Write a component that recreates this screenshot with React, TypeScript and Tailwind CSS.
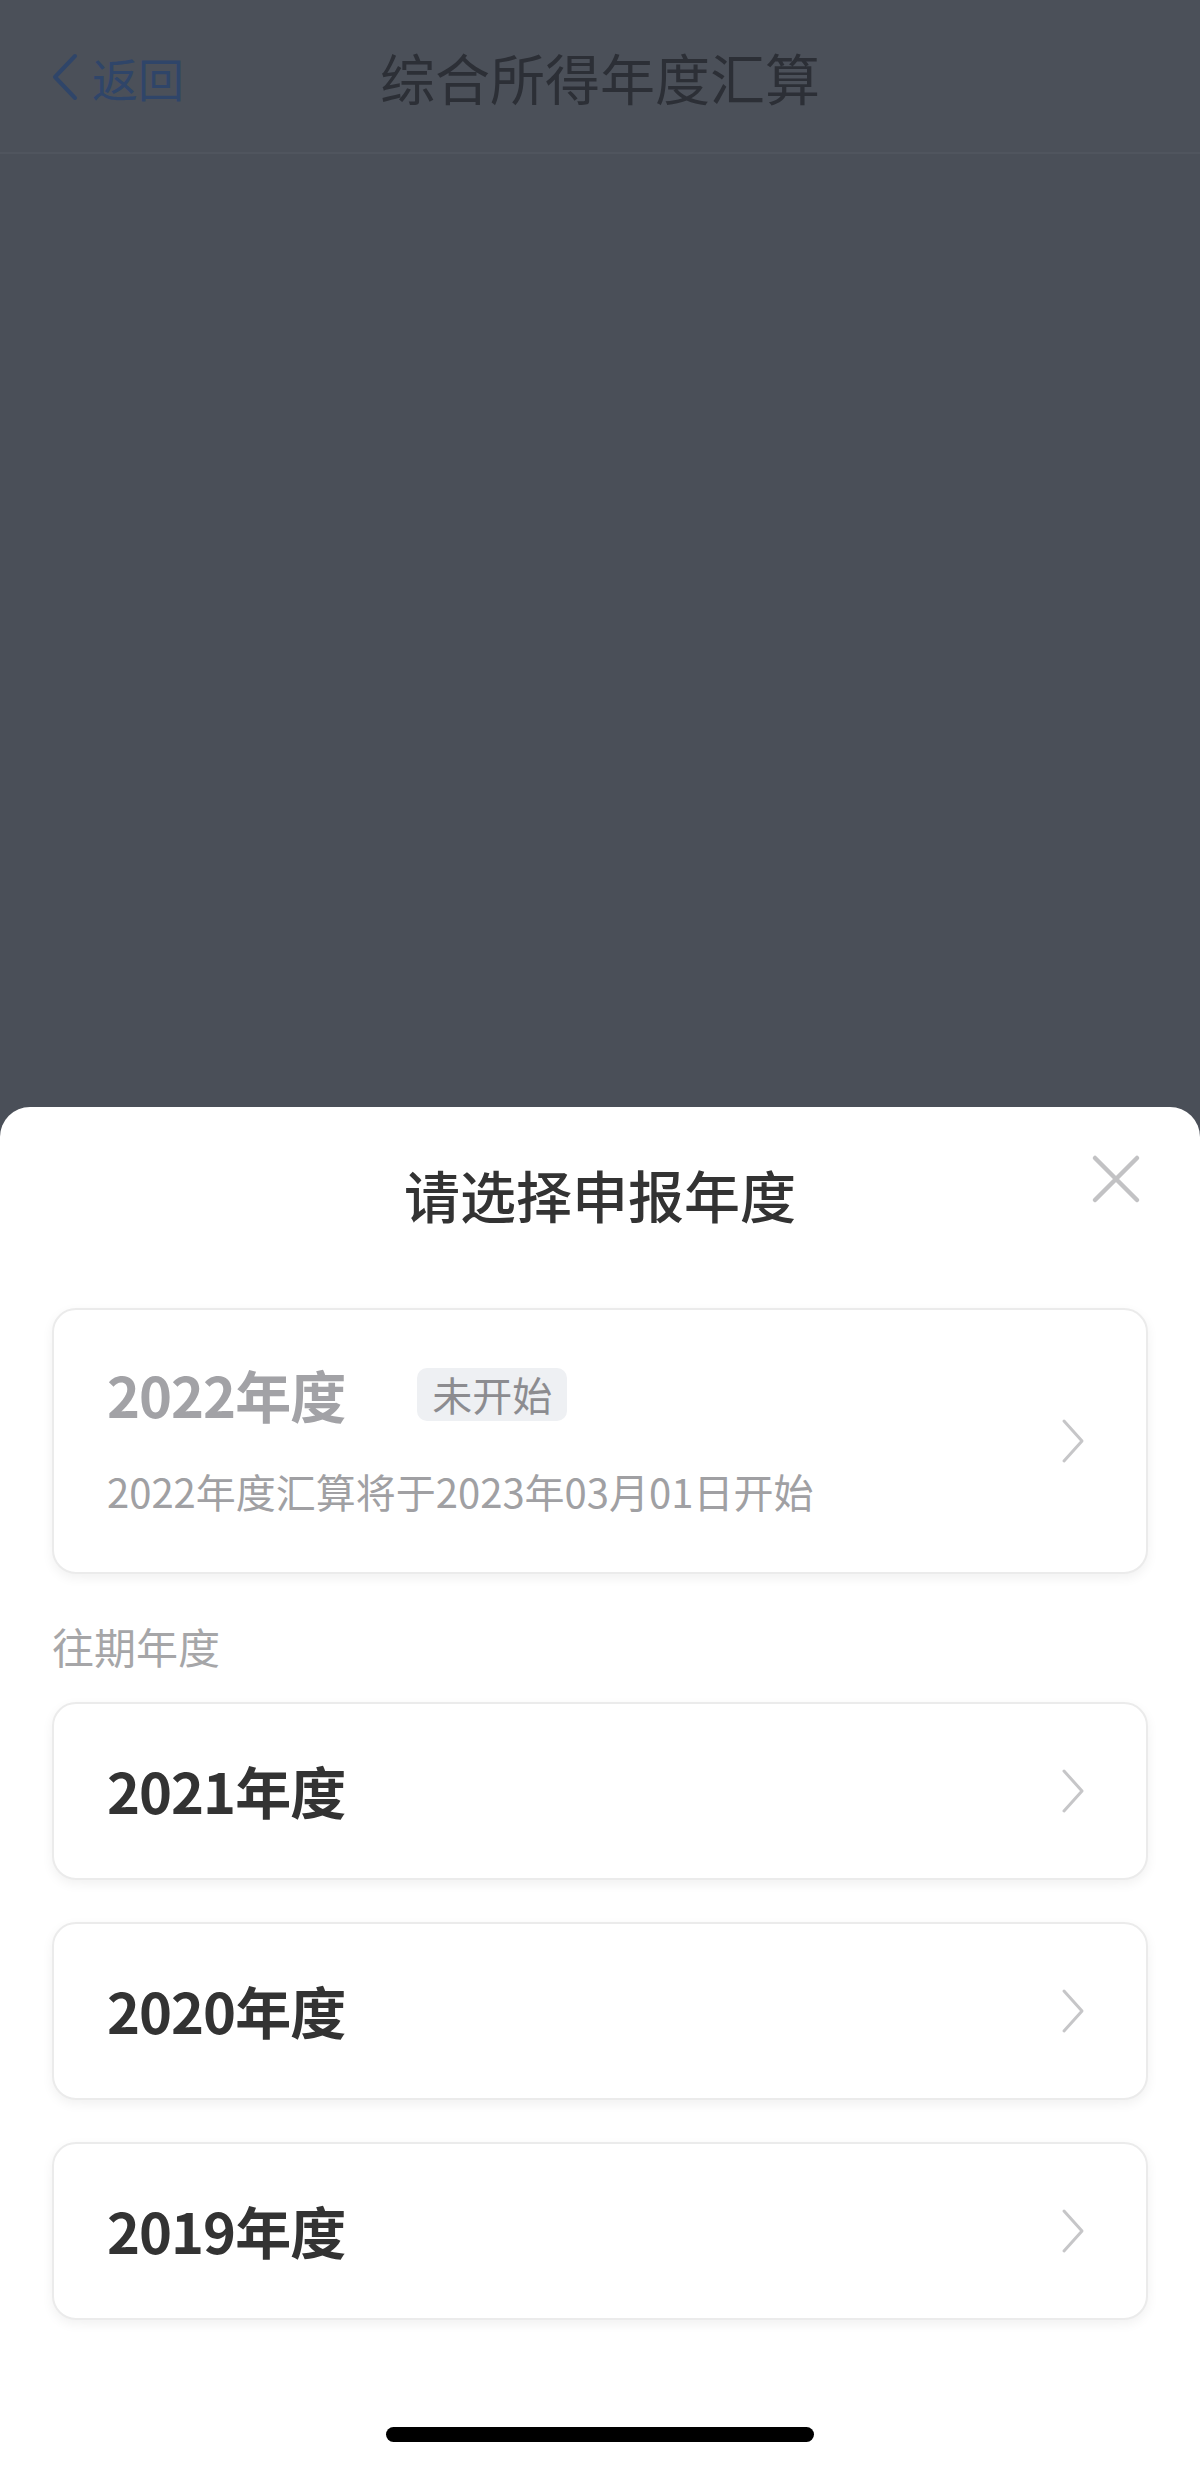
import React from "react";

const Chevron: React.FC = () => (
  <svg width="24" height="46" viewBox="0 0 24 46" fill="none">
    <path d="M3 3 L21 23 L3 43" stroke="#c6c6c8" strokeWidth="3" strokeLinecap="round" strokeLinejoin="round" />
  </svg>
);

const YearCard: React.FC<{ year: string }> = ({ year }) => (
  <div className="h-[178px] rounded-[24px] border-2 border-[#ebebeb] bg-white shadow-[0_4px_12px_rgba(0,0,0,0.06)] flex items-center justify-between pl-[53px] pr-[61px]">
    <div className="text-[56px] leading-none font-bold text-[#333333] tracking-[-1px] -mt-[2px]">{year}</div>
    <Chevron />
  </div>
);

const App: React.FC = () => {
  return (
    <div className="w-[1200px] h-[2465px] flex flex-col bg-[#4a4f58] font-['Noto_Sans_CJK_SC','Noto_Sans',sans-serif]">
      {/* Dimmed navigation bar */}
      <div className="h-[154px] shrink-0 relative flex items-center justify-center border-b-2 border-[#50555e] bg-[#4b5059]">
        <div className="absolute left-[50px] top-[52px] flex items-center gap-[12px]">
          <svg width="30" height="50" viewBox="0 0 30 50" fill="none">
            <path d="M25 4 L5 25 L25 46" stroke="#2f4569" strokeWidth="4" strokeLinecap="round" strokeLinejoin="round" />
          </svg>
          <span className="text-[46px] leading-none text-[#2f4569]">返回</span>
        </div>
        <div className="text-[55px] leading-none text-[#2c2f36]">综合所得年度汇算</div>
      </div>

      <div className="flex-1" />

      {/* Bottom sheet */}
      <div className="h-[1358px] shrink-0 bg-white rounded-t-[30px] relative flex flex-col">
        <div className="h-[174px] flex items-center justify-center">
          <div className="text-[56px] leading-none font-medium text-[#333333]">请选择申报年度</div>
        </div>
        <button className="absolute right-[56px] top-[44px] p-[2px]">
          <svg width="52" height="52" viewBox="0 0 52 52" fill="none">
            <path d="M5 5 L47 47 M47 5 L5 47" stroke="#c2c2c4" strokeWidth="4.5" strokeLinecap="round" />
          </svg>
        </button>

        <div className="px-[52px] flex flex-col">
          {/* Current year (not started) */}
          <div className="mt-[27px] h-[266px] rounded-[24px] border-2 border-[#ebebeb] bg-white shadow-[0_4px_12px_rgba(0,0,0,0.06)] flex items-center justify-between pl-[53px] pr-[61px]">
            <div className="flex flex-col">
              <div className="flex items-center h-[54px]">
                <span className="text-[56px] leading-none font-bold text-[#a2a2a6] tracking-[-1px]">2022年度</span>
                <span className="ml-[72px] h-[53px] px-[15px] rounded-[10px] bg-[#eef0f3] text-[40px] leading-[53px] text-[#8c8c90]">未开始</span>
              </div>
              <div className="mt-[46px] text-[40px] leading-[48px] text-[#a0a0a3]">2022年度汇算将于2023年03月01日开始</div>
            </div>
            <Chevron />
          </div>

          <div className="mt-[42px] text-[42px] leading-[60px] text-[#a6a6a8]">往期年度</div>

          <div className="mt-[26px] flex flex-col gap-[42px]">
            <YearCard year="2021年度" />
            <YearCard year="2020年度" />
            <YearCard year="2019年度" />
          </div>
        </div>

        <div className="mt-auto mb-[23px] flex justify-center">
          <div className="w-[428px] h-[15px] rounded-full bg-black" />
        </div>
      </div>
    </div>
  );
};

export default App;
